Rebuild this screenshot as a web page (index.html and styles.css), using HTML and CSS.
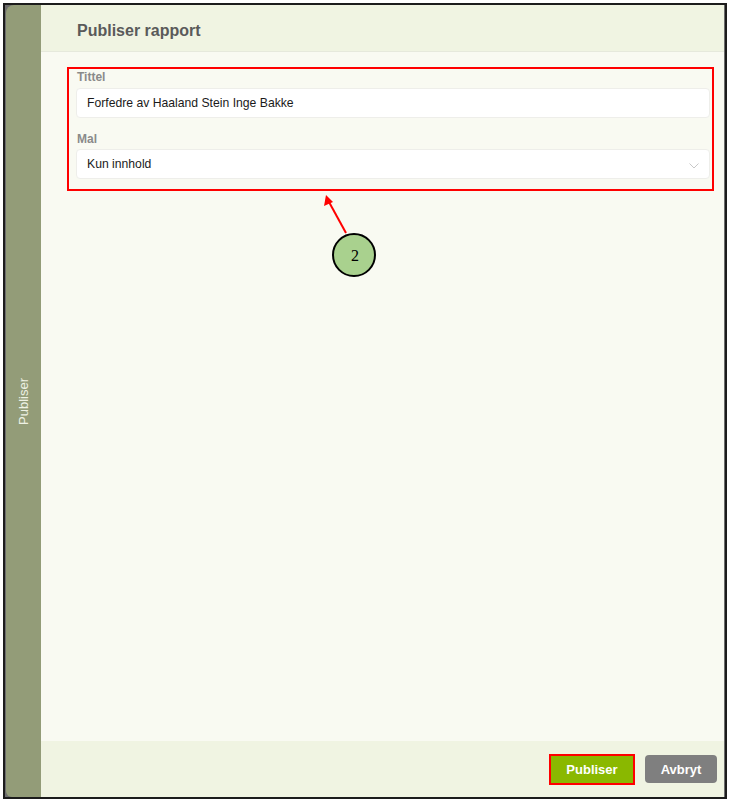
FILE: index.html
```html
<!DOCTYPE html>
<html>
<head>
<meta charset="utf-8">
<link rel="stylesheet" href="styles.css">
</head>
<body>
<div class="frame">
  <aside class="sidebar"><span class="side-label">Publiser</span></aside>
  <main class="panel">
    <header class="panel-head"><h1 class="title">Publiser rapport</h1></header>
    <section class="panel-body">
      <div class="form-box">
        <label class="label">Tittel</label>
        <div class="field">Forfedre av Haaland Stein Inge Bakke</div>
        <label class="label label-mal">Mal</label>
        <div class="field select">Kun innhold
          <svg class="chev" width="10" height="6" viewBox="0 0 10 6"><path d="M0.5 0.5 L5 5 L9.5 0.5" fill="none" stroke="#c8c8c8" stroke-width="1"/></svg>
        </div>
      </div>
    </section>
    <footer class="panel-foot">
      <button class="btn btn-primary">Publiser</button>
      <button class="btn btn-cancel">Avbryt</button>
    </footer>
  </main>
  <svg class="annot" width="90" height="100" viewBox="0 0 90 100">
    <line x1="47" y1="43" x2="30" y2="12" stroke="#ff0000" stroke-width="2"/>
    <polygon points="27,5 25,16 34,12" fill="#ff0000"/>
    <circle cx="55" cy="65" r="21" fill="#a9d18e" stroke="#000" stroke-width="2"/>
    <text x="56" y="71" text-anchor="middle" font-family="Liberation Serif, serif" font-size="16" fill="#000">2</text>
  </svg>
</div>
</body>
</html>
```

FILE: styles.css
```css
* { box-sizing: border-box; }
html, body { margin: 0; padding: 0; background: #fff; }
body { padding: 3px 2px 3px 3px; font-family: "Liberation Sans", Arial, sans-serif; }

.frame {
  position: relative;
  width: 724px;
  height: 796px;
  border: 2px solid #1c1c1c;
  background: #6d6d6d;
  display: flex;
}

.sidebar {
  width: 35px;
  margin-left: 1px;
  background: #939c78;
  border-top-left-radius: 8px;
  border-bottom-left-radius: 6px;
  display: flex;
  align-items: center;
  justify-content: center;
}
.side-label {
  transform: rotate(-90deg);
  color: #eef1e4;
  font-size: 13px;
  white-space: nowrap;
}

.panel {
  flex: 1;
  display: flex;
  flex-direction: column;
  background: #f9faf2;
  margin-right: 1px;
}

.panel-head {
  height: 47px;
  background: #f0f4e2;
  border-bottom: 1px solid #e6e9dc;
  padding: 17px 0 0 36px;
}
.title {
  margin: 0;
  font-size: 16px;
  font-weight: bold;
  color: #5a5a5a;
}

.panel-body {
  flex: 1;
  padding: 15px 10px 0 26px;
}

.form-box {
  border: 2px solid #ff0000;
  padding: 1px 2px 10px 7px;
  display: flex;
  flex-direction: column;
}
.label {
  font-size: 12px;
  font-weight: bold;
  color: #8a8a8a;
  height: 18px;
  line-height: 14px;
  padding-left: 1px;
}
.label-mal { margin-top: 14px; height: 17px; }

.field {
  height: 30px;
  background: #fff;
  border: 1px solid #eeeeea;
  border-radius: 4px;
  font-size: 12.2px;
  color: #1a1a1a;
  padding: 0 10px;
  display: flex;
  align-items: center;
}
.select { justify-content: space-between; }
.chev { margin-top: 3px; }

.panel-foot {
  height: 56px;
  background: #f0f4e2;
  display: flex;
  align-items: center;
  justify-content: flex-end;
  gap: 10px;
  padding: 0 7px 0 0;
}
.btn {
  font-family: "Liberation Sans", Arial, sans-serif;
  font-size: 13px;
  font-weight: bold;
  color: #fff;
  border: none;
  cursor: pointer;
}
.btn-primary {
  width: 86px;
  height: 31px;
  background: #8ab800;
  border: 2px solid #ff0000;
  border-radius: 0;
  margin-top: 1px;
}
.btn-cancel {
  width: 72px;
  height: 28px;
  background: #7f7f7f;
  border-radius: 4px;
}

.annot {
  position: absolute;
  left: 294px;
  top: 185px;
}
```
